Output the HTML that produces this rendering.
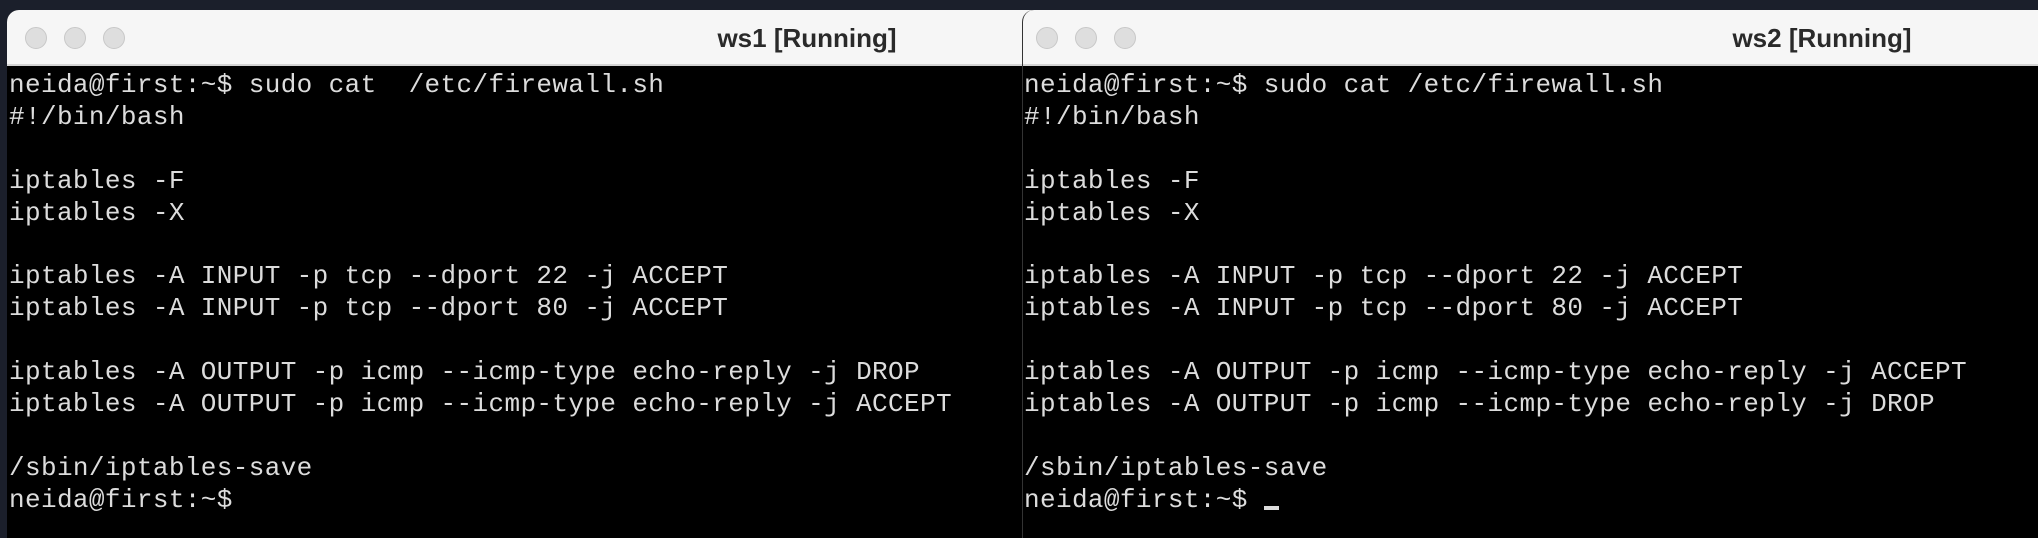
<!DOCTYPE html>
<html><head><meta charset="utf-8"><style>
html,body{margin:0;padding:0;width:2038px;height:538px;overflow:hidden;background:#1b1f2b;position:relative}
.win{position:absolute;top:10px;height:540px;background:#000;border-radius:12px 12px 0 0;overflow:hidden}
.tb{height:54px;background:#f6f6f6;border-bottom:2px solid #d4d4d4;position:relative}
.dot{position:absolute;top:17px;width:22px;height:22px;border-radius:50%;background:#dedede;border:1px solid #c8c8c8;box-sizing:border-box}
.title{position:absolute;top:0;font:bold 26px "Liberation Sans",sans-serif;line-height:56px;color:#2a2a2a;transform:translateX(-50%);white-space:nowrap}
pre{margin:0;padding:4px 0 0 2px;font:26px "Liberation Mono",monospace;line-height:31.9px;color:#dcdcdc;letter-spacing:0.38px}
.cur{display:inline-block;width:15px;height:4px;background:#dcdcdc;vertical-align:-3px}
</style></head><body>
<div class="win" style="left:7px;width:1640px">
<div class="tb">
<div class="dot" style="left:18px"></div><div class="dot" style="left:57px"></div><div class="dot" style="left:96px"></div>
<div class="title" style="left:800px">ws1 [Running]</div>
</div>
<pre>neida@first:~$ sudo cat  /etc/firewall.sh
#!/bin/bash

iptables -F
iptables -X

iptables -A INPUT -p tcp --dport 22 -j ACCEPT
iptables -A INPUT -p tcp --dport 80 -j ACCEPT

iptables -A OUTPUT -p icmp --icmp-type echo-reply -j DROP
iptables -A OUTPUT -p icmp --icmp-type echo-reply -j ACCEPT

/sbin/iptables-save
neida@first:~$</pre>
</div>
<div class="win" style="left:1022px;width:1600px;border-left:1px solid #333">
<div class="tb">
<div class="dot" style="left:13px"></div><div class="dot" style="left:52px"></div><div class="dot" style="left:91px"></div>
<div class="title" style="left:799px">ws2 [Running]</div>
</div>
<pre style="padding-left:1px">neida@first:~$ sudo cat /etc/firewall.sh
#!/bin/bash

iptables -F
iptables -X

iptables -A INPUT -p tcp --dport 22 -j ACCEPT
iptables -A INPUT -p tcp --dport 80 -j ACCEPT

iptables -A OUTPUT -p icmp --icmp-type echo-reply -j ACCEPT
iptables -A OUTPUT -p icmp --icmp-type echo-reply -j DROP

/sbin/iptables-save
neida@first:~$ <span class="cur"></span></pre>
</div>
</body></html>
